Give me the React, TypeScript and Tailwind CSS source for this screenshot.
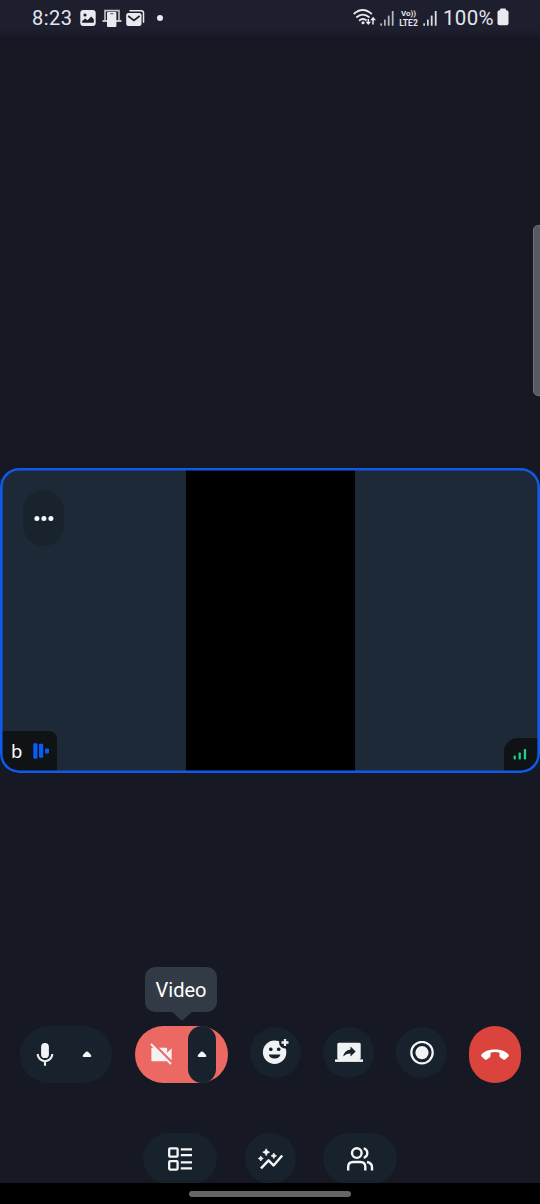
import React from "react";

type IconProps = { className?: string };

function ImageIcon() {
  return (
    <svg className="ml-[8px] h-[20px] w-[16px] shrink-0" viewBox="0 0 16 20">
      <rect x="0.3" y="2" width="15.4" height="16" rx="3" fill="#e9eaef" />
      <circle cx="5" cy="7" r="1.6" fill="#1c1e2e" />
      <path d="M2.2 14.8V13l3-2.6 2.3 1.8 3.7-3.6 2.6 2.6v3.6z" fill="#1c1e2e" />
    </svg>
  );
}

function DeviceIcon() {
  return (
    <svg className="ml-[6px] h-[20px] w-[20px] shrink-0" viewBox="0 0 20 20">
      <path d="M3 12.6V2.6h14v10" fill="none" stroke="#c4c6cc" strokeWidth="1.6" />
      <path d="M0.5 13h19" stroke="#d4d6dc" strokeWidth="1.8" />
      <rect x="5" y="4" width="9.4" height="15" rx="1" fill="#e9eaef" />
      <path d="M8.4 5.7h2.8" stroke="#1c1e2e" strokeWidth="0.8" />
    </svg>
  );
}

function MailIcon() {
  return (
    <svg className="ml-[4px] h-[20px] w-[19px] shrink-0" viewBox="0 0 19 20">
      <path d="M3.4 2.8h11.8q2.3 0 2.3 2.3v9.7" fill="none" stroke="#e9eaef" strokeWidth="1.5" />
      <rect x="0.2" y="5" width="15.3" height="13" rx="2.2" fill="#e9eaef" />
      <path d="M2.2 8l5.7 4.5L13.6 8" fill="none" stroke="#1c1e2e" strokeWidth="1.6" />
    </svg>
  );
}

function WifiIcon() {
  return (
    <svg className="h-[20px] w-[24px] shrink-0" viewBox="0 0 24 20" fill="none" stroke="#e9eaef" strokeWidth="1.8">
      <path d="M0.7 6Q9.7-2 18.8 6M3.3 9.5Q9.8 3.8 16.5 9.5M6.1 12.7Q9.9 9.5 13.5 12.5" />
      <circle cx="10" cy="14.8" r="1.5" fill="#e9eaef" stroke="none" />
      <path d="M15.3 11v4M20 16.5v-5" strokeWidth="1.5" />
      <path d="M12.5 13.7h5.6l-2.8 3.4zM17.2 12.2H23l-2.9-3.5z" fill="#e9eaef" stroke="none" />
    </svg>
  );
}

function SignalIcon({ className }: IconProps) {
  return (
    <svg className={className} viewBox="0 0 14 20" fill="#dcdee4">
      <rect x="0.3" y="14.2" width="1.7" height="2.5" rx=".5" />
      <rect x="4" y="10.6" width="1.7" height="6.1" rx=".5" />
      <rect x="7.8" y="6.6" width="1.8" height="10.1" rx=".5" />
      <rect x="11.8" y="1.9" width="1.8" height="14.8" rx=".5" />
    </svg>
  );
}

function CaretIcon({ className }: IconProps) {
  return (
    <svg className={className} viewBox="0 0 10 7" fill="#f4f6f8">
      <path d="M4 .8Q5 0 6 .8L8.8 3.8Q10 6 8.4 6H1.6Q0 6 1.2 3.8z" />
    </svg>
  );
}

function StatusBar() {
  return (
    <header className="flex h-[36px] w-full shrink-0 items-center bg-gradient-to-b from-[#1d1f2f] from-80% to-[#181a27] pl-[32px] font-['Roboto',sans-serif] text-[20px] leading-[35px] text-[#e4e6ec]">
      <span className="w-[40px] whitespace-nowrap tracking-[0.5px]">8:23</span>
      <ImageIcon />
      <DeviceIcon />
      <MailIcon />
      <span className="ml-[12px] h-[6px] w-[6px] rounded-full bg-[#e9eaef]" />
      <div className="ml-auto flex items-center pr-[31px]">
        <WifiIcon />
        <SignalIcon className="ml-[3px] h-[20px] w-[14px] translate-y-px opacity-80" />
        <span className="ml-[4px] flex w-[21px] flex-col items-center text-[9px] font-bold leading-[8px]">
          <span className="h-[9px] text-[8px] leading-[9px]">Vo))</span>
          <span className="h-[9px] text-[8.5px] leading-[10px]">LTE2</span>
        </span>
        <SignalIcon className="ml-[4px] h-[20px] w-[14px] translate-y-px" />
        <span className="ml-[6px] w-[52px] whitespace-nowrap text-[20.5px] tracking-[0.35px]">100%</span>
        <svg className="ml-[2px] h-[18px] w-[12px] -translate-y-px" viewBox="0 0 12 18" fill="#e9eaef">
          <rect x="3" y="0.5" width="6" height="4" rx="1" />
          <rect x="0.5" y="2.2" width="11" height="15" rx="2" />
        </svg>
      </div>
    </header>
  );
}

function VideoTile() {
  return (
    <section className="relative flex h-[305px] w-full shrink-0 overflow-hidden rounded-[19px] bg-[#1e2937]">
      <div className="ml-[186px] h-full w-[169px] bg-black" />
      <button className="absolute left-[23px] top-[22px] flex h-[56px] w-[41px] items-center justify-center rounded-[20.5px] bg-[#19232d]">
        <svg className="h-[6px] w-[20px]" viewBox="0 0 20 6" fill="#f8f9fb">
          <circle cx="2.9" cy="3.4" r="2.5" />
          <circle cx="9.9" cy="3.4" r="2.5" />
          <circle cx="16.9" cy="3.4" r="2.5" />
        </svg>
      </button>
      <div className="absolute bottom-0 left-0 flex h-[42px] w-[57px] items-center rounded-tr-[8px] bg-[#101316] pb-[2px] pl-[11px]">
        <span className="w-[13px] font-['Noto_Sans',sans-serif] text-[18.5px] leading-[20px] text-white">b</span>
        <svg className="ml-[9px] h-[16px] w-[17px]" viewBox="0 0 17 16" fill="#0a5cf5">
          <rect x="0.3" y="0.3" width="4.2" height="15.4" rx="1" />
          <rect x="6" y="0.8" width="4.2" height="14" rx="1" />
          <rect x="12" y="5.5" width="4" height="5" rx="1" />
        </svg>
      </div>
      <div className="absolute bottom-0 right-0 flex h-[35px] w-[36px] rounded-tl-[14px] bg-[#101316]">
        <svg className="ml-[9px] mt-[10px] h-[13px] w-[14px]" viewBox="0 0 14 13" fill="#20d18b">
          <rect x="0.6" y="7.6" width="2.2" height="4" rx=".8" />
          <rect x="5.6" y="4.4" width="2.2" height="7.2" rx=".8" />
          <rect x="10.8" y="1" width="2.3" height="10.6" rx=".8" />
        </svg>
      </div>
      <div className="pointer-events-none absolute inset-0 rounded-[19px] shadow-[inset_0_0_0_2.6px_#0e5aec]" />
    </section>
  );
}

function MicControl() {
  return (
    <button className="flex h-[57px] w-[92px] shrink-0 items-center rounded-[28.5px] bg-[#18222c]">
      <svg className="ml-[16px] h-[24px] w-[18px] -translate-y-[0.5px]" viewBox="0 0 18 24">
        <rect x="5.1" y="0.6" width="7.8" height="15" rx="3.9" fill="#f0f2f4" />
        <path d="M1.7 11.4a7.3 7.3 0 0 0 14.6 0M9 18.8v4.5" fill="none" stroke="#f0f2f4" strokeWidth="2.1" />
      </svg>
      <CaretIcon className="ml-[28px] h-[7px] w-[10px]" />
    </button>
  );
}

function VideoControl() {
  return (
    <div className="relative ml-[23px] shrink-0">
      <div className="absolute left-[10px] top-[-59px] flex h-[45px] w-[72px] items-center justify-center rounded-[10px] bg-[#323b45] font-['Roboto',sans-serif] text-[20px] text-white">
        Video
        <svg className="absolute left-[26px] top-[44px] h-[10px] w-[22px]" viewBox="0 0 22 10">
          <path d="M0 0h22L12 9q-1 1-2 0z" fill="#323b45" />
        </svg>
      </div>
      <button className="flex h-[57px] w-[93px] items-center rounded-[28.5px] bg-[#ec6963]">
        <svg className="ml-[13px] h-[27px] w-[27px]" viewBox="0 0 24 24" fill="#f4f2f3">
          <path d="M21 6.5l-4 4V7c0-.55-.45-1-1-1H9.82L21 17.18V6.5zM3.27 2L2 3.27 4.73 6H4c-.55 0-1 .45-1 1v10c0 .55.45 1 1 1h12c.21 0 .39-.08.54-.18L19.73 21 21 19.73 3.27 2z" />
        </svg>
        <span className="ml-[13px] flex h-[57px] w-[28px] items-center justify-center rounded-[14px] bg-[#18222c]">
          <CaretIcon className="h-[7px] w-[10px]" />
        </span>
      </button>
    </div>
  );
}

function ReactionIcon() {
  return (
    <svg className="h-[28px] w-[28px]" viewBox="0 0 28 28">
      <circle cx="12.6" cy="15.3" r="11.7" fill="#f0f2f4" />
      <circle cx="23" cy="5.6" r="5.9" fill="#18222c" />
      <path d="M23 2v7M19.5 5.5h7" stroke="#f0f2f4" strokeWidth="2.3" />
      <rect x="7" y="10.5" width="3.6" height="3.5" rx="1.6" fill="#18222c" />
      <rect x="14.9" y="10.5" width="3.6" height="3.5" rx="1.6" fill="#18222c" />
      <path d="M6.8 17.4h11.6a5.9 5 0 0 1-11.6 0z" fill="#18222c" />
    </svg>
  );
}

function ShareIcon() {
  return (
    <svg className="h-[20px] w-[28px] -translate-y-[0.5px]" viewBox="0 0 28 20">
      <rect x="2.3" y="0" width="23.4" height="17.4" rx="2" fill="#f0f2f4" />
      <rect x="0" y="16.9" width="28" height="2.5" fill="#f0f2f4" />
      <path d="M8.2 14q1-6.4 7.3-7.1V4l5.2 5-5.2 5v-2.9q-4.4-.2-7.3 2.9z" fill="#18222c" />
    </svg>
  );
}

function RecordIcon() {
  return (
    <svg className="h-[24px] w-[24px]" viewBox="0 0 24 24">
      <circle cx="12" cy="11.6" r="10.7" fill="none" stroke="#f4f6f8" strokeWidth="2.2" />
      <circle cx="12" cy="11.6" r="6.6" fill="#f0f2f4" />
    </svg>
  );
}

function HangUpIcon() {
  return (
    <svg className="h-[12px] w-[28px]" viewBox="0 0 28 12" fill="#fff">
      <path d="M14 .5C20 .5 25 2.5 27.4 5.4q.9 1 0 2l-3.2 3q-.9.8-1.9.1l-3-2q-.8-.5-.8-1.4V3.8q-4.5-1.4-9 0v3.3q0 .9-.8 1.4l-3 2q-1 .7-1.9-.1l-3.2-3q-.9-1 0-2C3 2.5 8 .5 14 .5z" />
    </svg>
  );
}

function LayoutIcon() {
  return (
    <svg className="h-[26px] w-[26px]" viewBox="0 0 26 26" fill="none" stroke="#f4f6f8" strokeWidth="2.3">
      <rect x="2.2" y="2.3" width="8.4" height="8.4" rx="1" />
      <rect x="2.2" y="15.2" width="8.4" height="8.4" rx="1" />
      <path d="M13.8 3.4H25M13.8 9.2H25M13.8 16.4H25M13.8 22.4H25" />
    </svg>
  );
}

function InsightsIcon() {
  return (
    <svg className="h-[24px] w-[26px]" viewBox="0 0 26 24">
      <path d="M3 21.3l7.6-8 5 5.2 8.6-10" fill="none" stroke="#f4f6f8" strokeWidth="2.4" strokeLinejoin="round" />
      <path d="M8.2 1.8l1.1 2.3 2.3 1.1-2.3 1.1-1.1 2.3-1.1-2.3-2.3-1.1 2.3-1.1zM2.8 9l.8 1.7 1.7.8-1.7.8-.8 1.7-.8-1.7-1.7-.8L2 10.7zM15.8 6.1l.9 1.8 1.8.9-1.8.9-.9 1.8-.9-1.8-1.8-.9 1.8-.9z" fill="#f4f6f8" stroke="#f4f6f8" strokeWidth=".8" />
    </svg>
  );
}

function PeopleIcon() {
  return (
    <svg className="h-[26px] w-[28px]" viewBox="0 0 28 26" fill="none" stroke="#f4f6f8" strokeWidth="2.4">
      <circle cx="10.8" cy="7.1" r="4.8" />
      <path d="M2.2 24.5v-3.7q0-4.8 4.8-4.8h7.5q4.8 0 4.8 4.8v3.7M17.7 2.3a5 5 0 0 1 0 9.6M21 16q5 1 5 5.2v3.3" />
    </svg>
  );
}

export default function App() {
  return (
    <main className="relative flex h-[1204px] w-[540px] flex-col overflow-hidden bg-[#161823]">
      <StatusBar />
      <div className="flex h-[1147px] shrink-0 flex-col overflow-hidden pt-[432px]">
        <VideoTile />
        <nav className="mt-[253px] flex shrink-0 items-start pl-[20px]">
          <MicControl />
          <VideoControl />
          <button className="ml-[22px] mt-px flex h-[51px] w-[51px] shrink-0 items-center justify-center rounded-full bg-[#18222c]">
            <span className="-mt-[4px]"><ReactionIcon /></span>
          </button>
          <button className="ml-[22px] mt-px flex h-[51px] w-[51px] shrink-0 items-center justify-center rounded-full bg-[#18222c] pl-px">
            <ShareIcon />
          </button>
          <button className="ml-[22px] mt-px flex h-[51px] w-[51px] shrink-0 items-center justify-center rounded-full bg-[#18222c] pl-px">
            <RecordIcon />
          </button>
          <button className="ml-[22px] flex h-[57px] w-[52px] shrink-0 items-center justify-center rounded-[26px] bg-[#db443c]">
            <HangUpIcon />
          </button>
        </nav>
        <nav className="mt-[50px] flex shrink-0 items-start pl-[143px]">
          <button className="flex h-[51px] w-[74px] items-center justify-center rounded-[25.5px] bg-[#18222c]">
            <LayoutIcon />
          </button>
          <button className="ml-[28px] flex h-[51px] w-[51px] items-center justify-center rounded-full bg-[#18222c]">
            <InsightsIcon />
          </button>
          <button className="ml-[27px] flex h-[51px] w-[74px] items-center justify-center rounded-[25.5px] bg-[#18222c]">
            <PeopleIcon />
          </button>
        </nav>
      </div>
      <footer className="flex h-[21px] shrink-0 justify-center bg-black pt-[8px]">
        <span className="h-[6px] w-[162px] rounded-full bg-[#666]" />
      </footer>
      <div className="absolute right-[-5px] top-[225px] h-[171px] w-[12px] rounded-[5px] border border-[#6d7078] bg-[#575a64]" />
    </main>
  );
}
